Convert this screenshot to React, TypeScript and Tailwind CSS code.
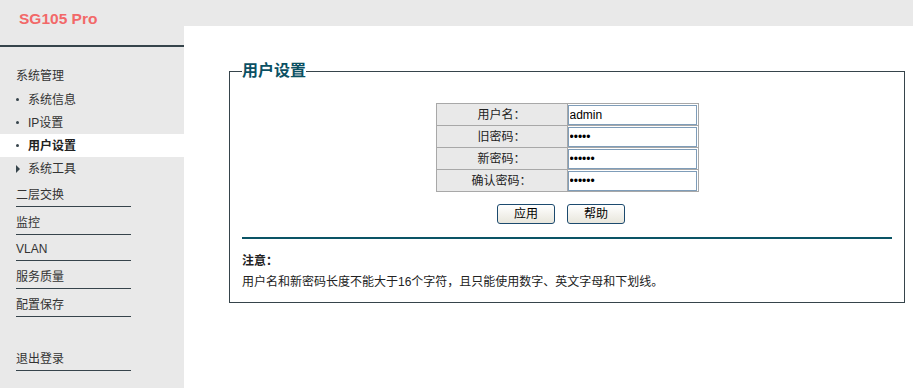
import React from 'react';

const font = "font-['Liberation_Sans','Noto_Sans_CJK_SC',sans-serif]";

const subItems = [
  { label: '系统信息', active: false },
  { label: 'IP设置', active: false },
  { label: '用户设置', active: true },
];

// block heights tuned so the underlines land where the original ones are
const groups = [
  { label: '二层交换', h: 'h-[27px]' },
  { label: '监控', h: 'h-[28px]' },
  { label: 'VLAN', h: 'h-[26px]' },
  { label: '服务质量', h: 'h-[28px]' },
  { label: '配置保存', h: 'h-[28px]' },
];

const rows = [
  { label: '用户名：', type: 'text', value: 'admin' },
  { label: '旧密码：', type: 'password', value: '12345' },
  { label: '新密码：', type: 'password', value: '123456' },
  { label: '确认密码：', type: 'password', value: '123456' },
];

const Sidebar = () => (
  <div className="w-[184px] shrink-0 bg-[#e9e9e9] flex flex-col text-[12px] text-[#333]">
    <div className="h-[45px] pl-[19px] pt-[10px]">
      <span className="text-[15.5px] font-bold text-[#f26868] leading-[18px]">SG105 Pro</span>
    </div>
    <div className="h-[2px] bg-[#36444b]"></div>

    <div className="pt-[17px]">
      <div className="h-[24px] flex items-center pl-[16px]">系统管理</div>
      {subItems.map(item => (
        <div
          key={item.label}
          className={`h-[23px] flex items-center pl-[16px] ${item.active ? 'bg-white font-bold text-[#222]' : ''}`}
        >
          <span className="w-[3px] h-[3px] rounded-full bg-[#36444b] mr-[9px]"></span>
          {item.label}
        </div>
      ))}
      <div className="h-[23px] flex items-center pl-[16px]">
        <svg width="4" height="8" viewBox="0 0 4 8" className="mr-[8px]">
          <path d="M0 0 L4 4 L0 8 Z" fill="#36444b" />
        </svg>
        系统工具
      </div>
    </div>

    {groups.map(g => (
      <div key={g.label} className={`ml-[16px] w-[115px] ${g.h} flex items-end pb-[3px] border-b border-[#36444b] leading-[16px]`}>
        {g.label}
      </div>
    ))}

    <div className="mt-[27px] ml-[16px] w-[115px] h-[27px] flex items-end pb-[3px] border-b border-[#36444b] leading-[16px]">
      退出登录
    </div>
  </div>
);

const UserSettings = () => (
  <fieldset className="mt-[35px] ml-[45px] w-[676px] border border-[#36444b] px-[12px] pb-[12px]">
    <legend className="text-[16px] font-bold text-[#0b5063] leading-[20px]">用户设置</legend>

    <div className="flex justify-center mt-[22px]">
      <table className="border-collapse text-[12px] text-[#222]">
        <tbody>
          {rows.map(r => (
            <tr key={r.label}>
              <td className="w-[131px] h-[22px] p-0 border border-[#a8a8a8] bg-[#e9e9e9] text-center">{r.label}</td>
              <td className="w-[131px] h-[22px] p-0 border border-[#a8a8a8]">
                <input
                  type={r.type}
                  defaultValue={r.value}
                  readOnly
                  className="block w-[129px] h-[20px] border border-[#7f9db9] bg-white px-[1px] text-[12px] text-black outline-none"
                />
              </td>
            </tr>
          ))}
        </tbody>
      </table>
    </div>

    <div className="flex justify-center gap-[12px] pr-[12px] mt-[12px]">
      {['应用', '帮助'].map(b => (
        <button
          key={b}
          className="w-[58px] h-[20px] rounded-[3px] border border-[#1c4a6e] bg-gradient-to-b from-white to-[#e8e6dc] text-[12px] text-black leading-[18px]"
        >
          {b}
        </button>
      ))}
    </div>

    <div className="mt-[13px] h-[2px] bg-[#0a5465]"></div>

    <div className="mt-[14px] text-[12px] font-bold text-[#222] leading-[16px]">注意：</div>
    <div className="mt-[5px] text-[12px] text-[#222] leading-[16px]">
      用户名和新密码长度不能大于16个字符，且只能使用数字、英文字母和下划线。
    </div>
  </fieldset>
);

export default function App() {
  return (
    <div className={`flex w-[913px] h-[388px] bg-white ${font}`}>
      <Sidebar />
      <div className="flex-1 flex flex-col">
        <div className="h-[26px] bg-[#e9e9e9]"></div>
        <UserSettings />
      </div>
    </div>
  );
}
